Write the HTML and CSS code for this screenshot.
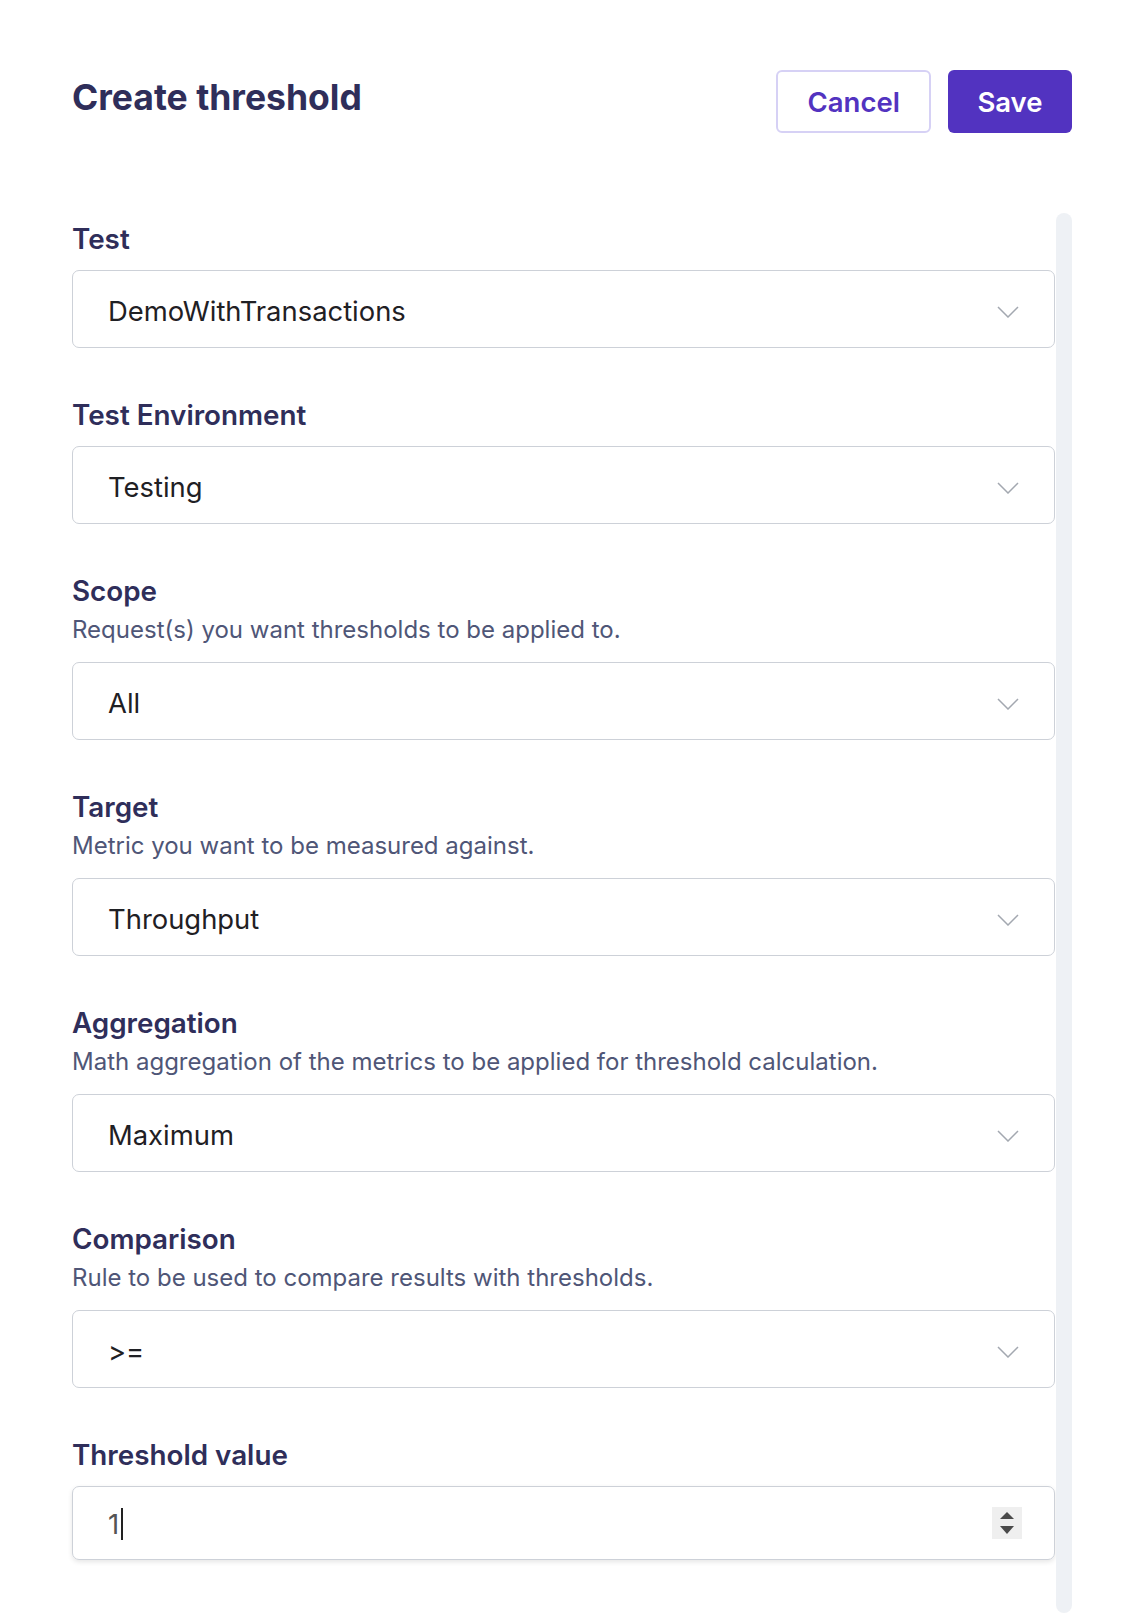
FILE: index.html
```html
<!DOCTYPE html>
<html lang="en">
<head>
<meta charset="utf-8">
<title>Create threshold</title>
<link rel="stylesheet" href="styles.css">
</head>
<body>
<div class="page">
  <header class="header">
    <h1 class="title">Create threshold</h1>
    <div class="actions">
      <button class="btn btn-secondary">Cancel</button>
      <button class="btn btn-primary">Save</button>
    </div>
  </header>
  <div class="main">
    <form class="form">
      <div class="field">
        <div class="label">Test</div>
        <div class="select"><span>DemoWithTransactions</span><svg class="chev" width="22" height="12" viewBox="0 0 22 12"><polyline points="1,1 11,11 21,1" fill="none" stroke="#a3a8b0" stroke-width="1.5"/></svg></div>
      </div>
      <div class="field">
        <div class="label">Test Environment</div>
        <div class="select"><span>Testing</span><svg class="chev" width="22" height="12" viewBox="0 0 22 12"><polyline points="1,1 11,11 21,1" fill="none" stroke="#a3a8b0" stroke-width="1.5"/></svg></div>
      </div>
      <div class="field has-desc">
        <div class="label">Scope</div>
        <div class="desc">Request(s) you want thresholds to be applied to.</div>
        <div class="select"><span>All</span><svg class="chev" width="22" height="12" viewBox="0 0 22 12"><polyline points="1,1 11,11 21,1" fill="none" stroke="#a3a8b0" stroke-width="1.5"/></svg></div>
      </div>
      <div class="field has-desc">
        <div class="label">Target</div>
        <div class="desc">Metric you want to be measured against.</div>
        <div class="select"><span>Throughput</span><svg class="chev" width="22" height="12" viewBox="0 0 22 12"><polyline points="1,1 11,11 21,1" fill="none" stroke="#a3a8b0" stroke-width="1.5"/></svg></div>
      </div>
      <div class="field has-desc">
        <div class="label">Aggregation</div>
        <div class="desc">Math aggregation of the metrics to be applied for threshold calculation.</div>
        <div class="select"><span>Maximum</span><svg class="chev" width="22" height="12" viewBox="0 0 22 12"><polyline points="1,1 11,11 21,1" fill="none" stroke="#a3a8b0" stroke-width="1.5"/></svg></div>
      </div>
      <div class="field has-desc">
        <div class="label">Comparison</div>
        <div class="desc">Rule to be used to compare results with thresholds.</div>
        <div class="select"><span>&gt;=</span><svg class="chev" width="22" height="12" viewBox="0 0 22 12"><polyline points="1,1 11,11 21,1" fill="none" stroke="#a3a8b0" stroke-width="1.5"/></svg></div>
      </div>
      <div class="field">
        <div class="label">Threshold value</div>
        <div class="input"><span class="value">1</span><span class="caret"></span><span class="spacer"></span>
          <span class="spin"><svg width="30" height="32" viewBox="0 0 30 32"><polygon points="8,12 15,5 22,12" fill="#4a4a4a"/><polygon points="8,19 22,19 15,27" fill="#4a4a4a"/></svg></span>
        </div>
      </div>
    </form>
    <div class="track"></div>
  </div>
</div>
</body>
</html>
```

FILE: styles.css
```css
* { box-sizing: border-box; }
body {
  margin: 0;
  background: #ffffff;
  font-family: Inter, "Noto Sans", sans-serif;
}
.page {
  padding: 0 50px 0 72px;
}
.header {
  display: flex;
  justify-content: space-between;
  align-items: flex-start;
  padding-top: 70px;
}
.title {
  margin: 8px 0 0;
  font-size: 35.5px;
  line-height: 40px;
  font-weight: 700;
  color: #2f2e5a;
}
.actions {
  display: flex;
  gap: 16.5px;
}
.btn {
  height: 63px;
  border-radius: 6px;
  font-family: Inter, sans-serif;
  font-size: 27.5px;
  font-weight: 600;
  padding: 0 29.5px;
  cursor: pointer;
}
.btn-secondary {
  background: #ffffff;
  color: #5233c0;
  border: 2px solid #d6d1f5;
}
.btn-primary {
  background: #5233c0;
  color: #ffffff;
  border: 0;
}
.main {
  display: flex;
  gap: 1px;
  margin-top: 80px;
}
.form {
  flex: 1;
  padding: 10px 0 53px;
  margin: 0;
}
.track {
  width: 16px;
  background: #eef1f5;
  border-radius: 8px;
}
.field + .field {
  margin-top: 51px;
}
.label {
  font-size: 27.8px;
  line-height: 32px;
  font-weight: 600;
  color: #2f2e5a;
  margin-bottom: 15px;
}
.has-desc .label {
  margin-bottom: 8px;
}
.desc {
  font-size: 24px;
  line-height: 30px;
  color: #4f5677;
  margin-bottom: 17px;
}
.select {
  height: 78px;
  border: 1.5px solid #cdd1d8;
  border-radius: 7px;
  padding: 3px 35px 0 35px;
  display: flex;
  align-items: center;
  justify-content: space-between;
  font-size: 27.4px;
  color: #1f2024;
}
.chev {
  margin-top: 3px;
}
.input {
  height: 74px;
  border: 1.5px solid #cdd1d8;
  border-radius: 7px;
  padding: 2px 32px 0 35px;
  display: flex;
  align-items: center;
  font-size: 27.5px;
  color: #555555;
  box-shadow: 0 2px 5px rgba(0, 0, 0, 0.10);
}
.caret {
  width: 2px;
  height: 32px;
  background: #222222;
  margin-left: 2px;
}
.spacer { flex: 1; }
.spin {
  width: 30px;
  height: 32px;
  background: #efefef;
  display: flex;
  margin-top: -2px;
}
```
